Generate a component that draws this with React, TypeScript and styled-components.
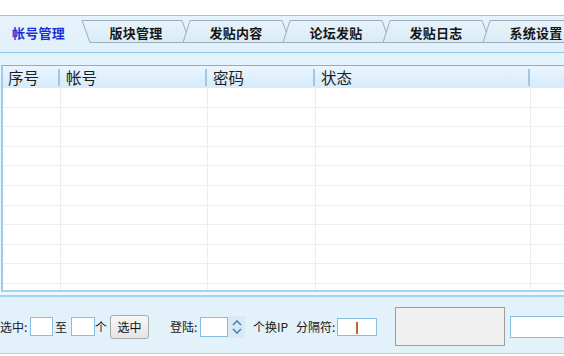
import React from "react";
import styled, { createGlobalStyle } from "styled-components";

const GlobalStyle = createGlobalStyle`
  html, body {
    margin: 0;
    padding: 0;
    background: #ffffff;
  }
  body {
    width: 564px;
    height: 356px;
    overflow: hidden;
    font-family: "Noto Sans CJK SC", "Noto Sans", sans-serif;
  }
`;

const Window = styled.div`
  width: 564px;
  height: 356px;
  overflow: hidden;
  display: flex;
  flex-direction: column;
  background: #ffffff;
`;

const TopGap = styled.div`
  flex: none;
  height: 15px;
`;

const TabStrip = styled.div`
  flex: none;
  height: 36px;
  border-top: 1px solid #8ccbe8;
  border-bottom: 1px solid #8ccbe8;
  background: linear-gradient(#e7f3fb, #e1f0f9);
`;

const TabRow = styled.div`
  display: flex;
  height: 27px;
  margin-left: -18px;
`;

const Tab = styled.div<{ $z: number; $active?: boolean }>`
  flex: none;
  position: relative;
  z-index: ${(p) => p.$z};
  width: 108px;
  margin-right: -8px;
  height: 27px;
  box-sizing: border-box;
  padding-top: 5px;
  padding-left: ${(p) => (p.$active ? "5px" : "0")};
  display: flex;
  align-items: center;
  justify-content: center;
`;

const TabShape = styled.svg`
  position: absolute;
  left: 0;
  top: 0;
  width: 108px;
  height: 27px;
  overflow: visible;
`;

const TabLabel = styled.span<{ $active?: boolean }>`
  position: relative;
  font-size: 13px;
  font-weight: 700;
  letter-spacing: 0.2px;
  color: ${(p) => (p.$active ? "#1d2fd6" : "#151515")};
  white-space: nowrap;
`;

const TabPage = styled.div`
  flex: none;
  padding: 12px 0 0 1px;
  background: linear-gradient(#e6f2fa, #e9f5fb 20px, #eef8fd);
`;

const Grid = styled.div`
  border-top: 1px solid #7ab5d5;
  border-left: 2px solid #9ccde8;
  border-bottom: 2px solid #a2d5ee;
  background: #ffffff;
  margin-bottom: 3px;
`;

const HeaderRow = styled.div`
  display: flex;
  height: 22px;
  background: linear-gradient(#eaf5fe, #d6ebfa);
`;

const HeaderCell = styled.div<{ $w?: number }>`
  flex: ${(p) => (p.$w ? `0 0 ${p.$w}px` : "1 1 auto")};
  display: flex;
  align-items: center;
  box-sizing: border-box;
  padding-left: 5px;
`;

const HeaderText = styled.span`
  flex: 1;
  font-size: 15.5px;
  color: #1e1e1e;
  line-height: 22px;
  white-space: nowrap;
`;

const HeaderSep = styled.span`
  flex: none;
  width: 2px;
  height: 17px;
  margin-right: 1px;
  background: #a3c7e3;
`;

const Body = styled.div`
  height: 202px;
  overflow: hidden;
`;

const Row = styled.div`
  display: flex;
  height: 19.6px;
  box-sizing: border-box;
  border-bottom: 1px solid #efefef;
`;

const Cell = styled.div<{ $w?: number }>`
  flex: ${(p) => (p.$w ? `0 0 ${p.$w}px` : "1 1 auto")};
  box-sizing: border-box;
  border-right: ${(p) => (p.$w ? "1px solid #ededed" : "none")};
`;

const Panel = styled.div`
  flex: none;
  height: 53px;
  padding-top: 3px;
  border-top: 2px solid #9fd3ee;
  border-bottom: 1px solid #9fd3ee;
  margin-bottom: 2px;
  background: #e3f1fa;
  display: flex;
  align-items: center;
`;

const Label = styled.span<{ $w: number; $ml?: number }>`
  flex: none;
  width: ${(p) => p.$w}px;
  margin-left: ${(p) => p.$ml ?? 0}px;
  font-size: 12px;
  color: #202020;
  white-space: nowrap;
`;

const Field = styled.div<{ $w: number; $h: number; $ml?: number }>`
  flex: none;
  width: ${(p) => p.$w}px;
  height: ${(p) => p.$h}px;
  margin-left: ${(p) => p.$ml ?? 0}px;
  box-sizing: border-box;
  border: 1px solid #86bfe0;
  background: #ffffff;
  display: flex;
  align-items: center;
  justify-content: center;
  font-family: "Liberation Sans", sans-serif;
  font-size: 13px;
  color: #000000;
`;

const Button = styled.div<{ $ml?: number }>`
  flex: none;
  width: 39px;
  height: 24px;
  margin-left: ${(p) => p.$ml ?? 0}px;
  box-sizing: border-box;
  border: 1px solid #a9a9a9;
  border-radius: 3px;
  background: linear-gradient(#f7f7f7, #e4e4e4);
  display: flex;
  align-items: center;
  justify-content: center;
  font-size: 12px;
  color: #111;
`;

const Spin = styled.div`
  flex: none;
  width: 17px;
  height: 22px;
  background: #dde9f1;
  display: flex;
  flex-direction: column;
  align-items: center;
  justify-content: center;
  gap: 2px;
`;

const Sunken = styled.div<{ $ml?: number }>`
  flex: none;
  width: 110px;
  height: 39px;
  margin-left: ${(p) => p.$ml ?? 0}px;
  box-sizing: border-box;
  border: 1px solid #9d9d9d;
  background: #f0f0f0;
`;

const tabs = ["帐号管理", "版块管理", "发贴内容", "论坛发贴", "发贴日志", "系统设置"];
const columns: { title: string; w?: number }[] = [
  { title: "序号", w: 58 },
  { title: "帐号", w: 147 },
  { title: "密码", w: 108 },
  { title: "状态", w: 215 },
  { title: "" },
];
const ACTIVE = 0;
const EDGE = "#98aebe";

const TabOutline = ({ afterActive, id }: { afterActive: boolean; id: string }) => (
  <TabShape viewBox="0 0 108 27">
    <defs>
      <linearGradient id={id} x1="0" y1="0" x2="0" y2="1">
        <stop offset="0" stopColor="#e8f3fa" />
        <stop offset="1" stopColor="#d9ebf5" />
      </linearGradient>
    </defs>
    {afterActive ? (
      <>
        <path d="M0 4.5 L100 4.5 L108 27 L8 27 Z" fill={`url(#${id})`} />
        <path d="M8 26.5 L0 4.5 L100 4.5 L108 26.5" stroke={EDGE} fill="none" />
        <path d="M8 26.5 H108" stroke={EDGE} />
      </>
    ) : (
      <>
        <path d="M1 27 L8 4.5 L100 4.5 L108 27 Z" fill={`url(#${id})`} />
        <path d="M1 26.5 L8 4.5 L100 4.5 L108 26.5" stroke={EDGE} fill="none" />
        <path d="M0 26.5 H108" stroke={EDGE} />
      </>
    )}
  </TabShape>
);

const Chevron = ({ up }: { up?: boolean }) => (
  <svg width="10" height="6" viewBox="0 0 10 6">
    <polyline
      points={up ? "1,5 5,1 9,5" : "1,1 5,5 9,1"}
      fill="none"
      stroke="#3f86c8"
      strokeWidth="1.6"
    />
  </svg>
);

export default function App() {
  return (
    <Window>
      <GlobalStyle />
      <TopGap />
      <TabStrip>
        <TabRow>
          {tabs.map((t, i) => (
            <Tab key={t} $z={i === ACTIVE ? 20 : i + 1} $active={i === ACTIVE}>
              {i !== ACTIVE && <TabOutline afterActive={i === ACTIVE + 1} id={`tabfill${i}`} />}
              <TabLabel $active={i === ACTIVE}>{t}</TabLabel>
            </Tab>
          ))}
        </TabRow>
      </TabStrip>
      <TabPage>
        <Grid>
          <HeaderRow>
            {columns.map((c, i) => (
              <HeaderCell key={i} $w={c.w}>
                <HeaderText>{c.title}</HeaderText>
                {c.w && <HeaderSep />}
              </HeaderCell>
            ))}
          </HeaderRow>
          <Body>
            {Array.from({ length: 11 }).map((_, r) => (
              <Row key={r}>
                {columns.map((c, i) => (
                  <Cell key={i} $w={c.w} />
                ))}
              </Row>
            ))}
          </Body>
        </Grid>
      </TabPage>
      <Panel>
        <Label $w={30}>选中:</Label>
        <Field $w={23} $h={19} />
        <Label $w={16} $ml={2}>至</Label>
        <Field $w={24} $h={19} />
        <Label $w={15}>个</Label>
        <Button>选中</Button>
        <Label $w={30} $ml={21}>登陆:</Label>
        <Field $w={28} $h={20} />
        <Spin>
          <Chevron up />
          <Chevron />
        </Spin>
        <Label $w={38} $ml={8}>个换IP</Label>
        <Label $w={41} $ml={5}>分隔符:</Label>
        <Field $w={40} $h={18}>|</Field>
        <Sunken $ml={18} />
        <Field $w={60} $h={22} $ml={5} />
      </Panel>
    </Window>
  );
}
